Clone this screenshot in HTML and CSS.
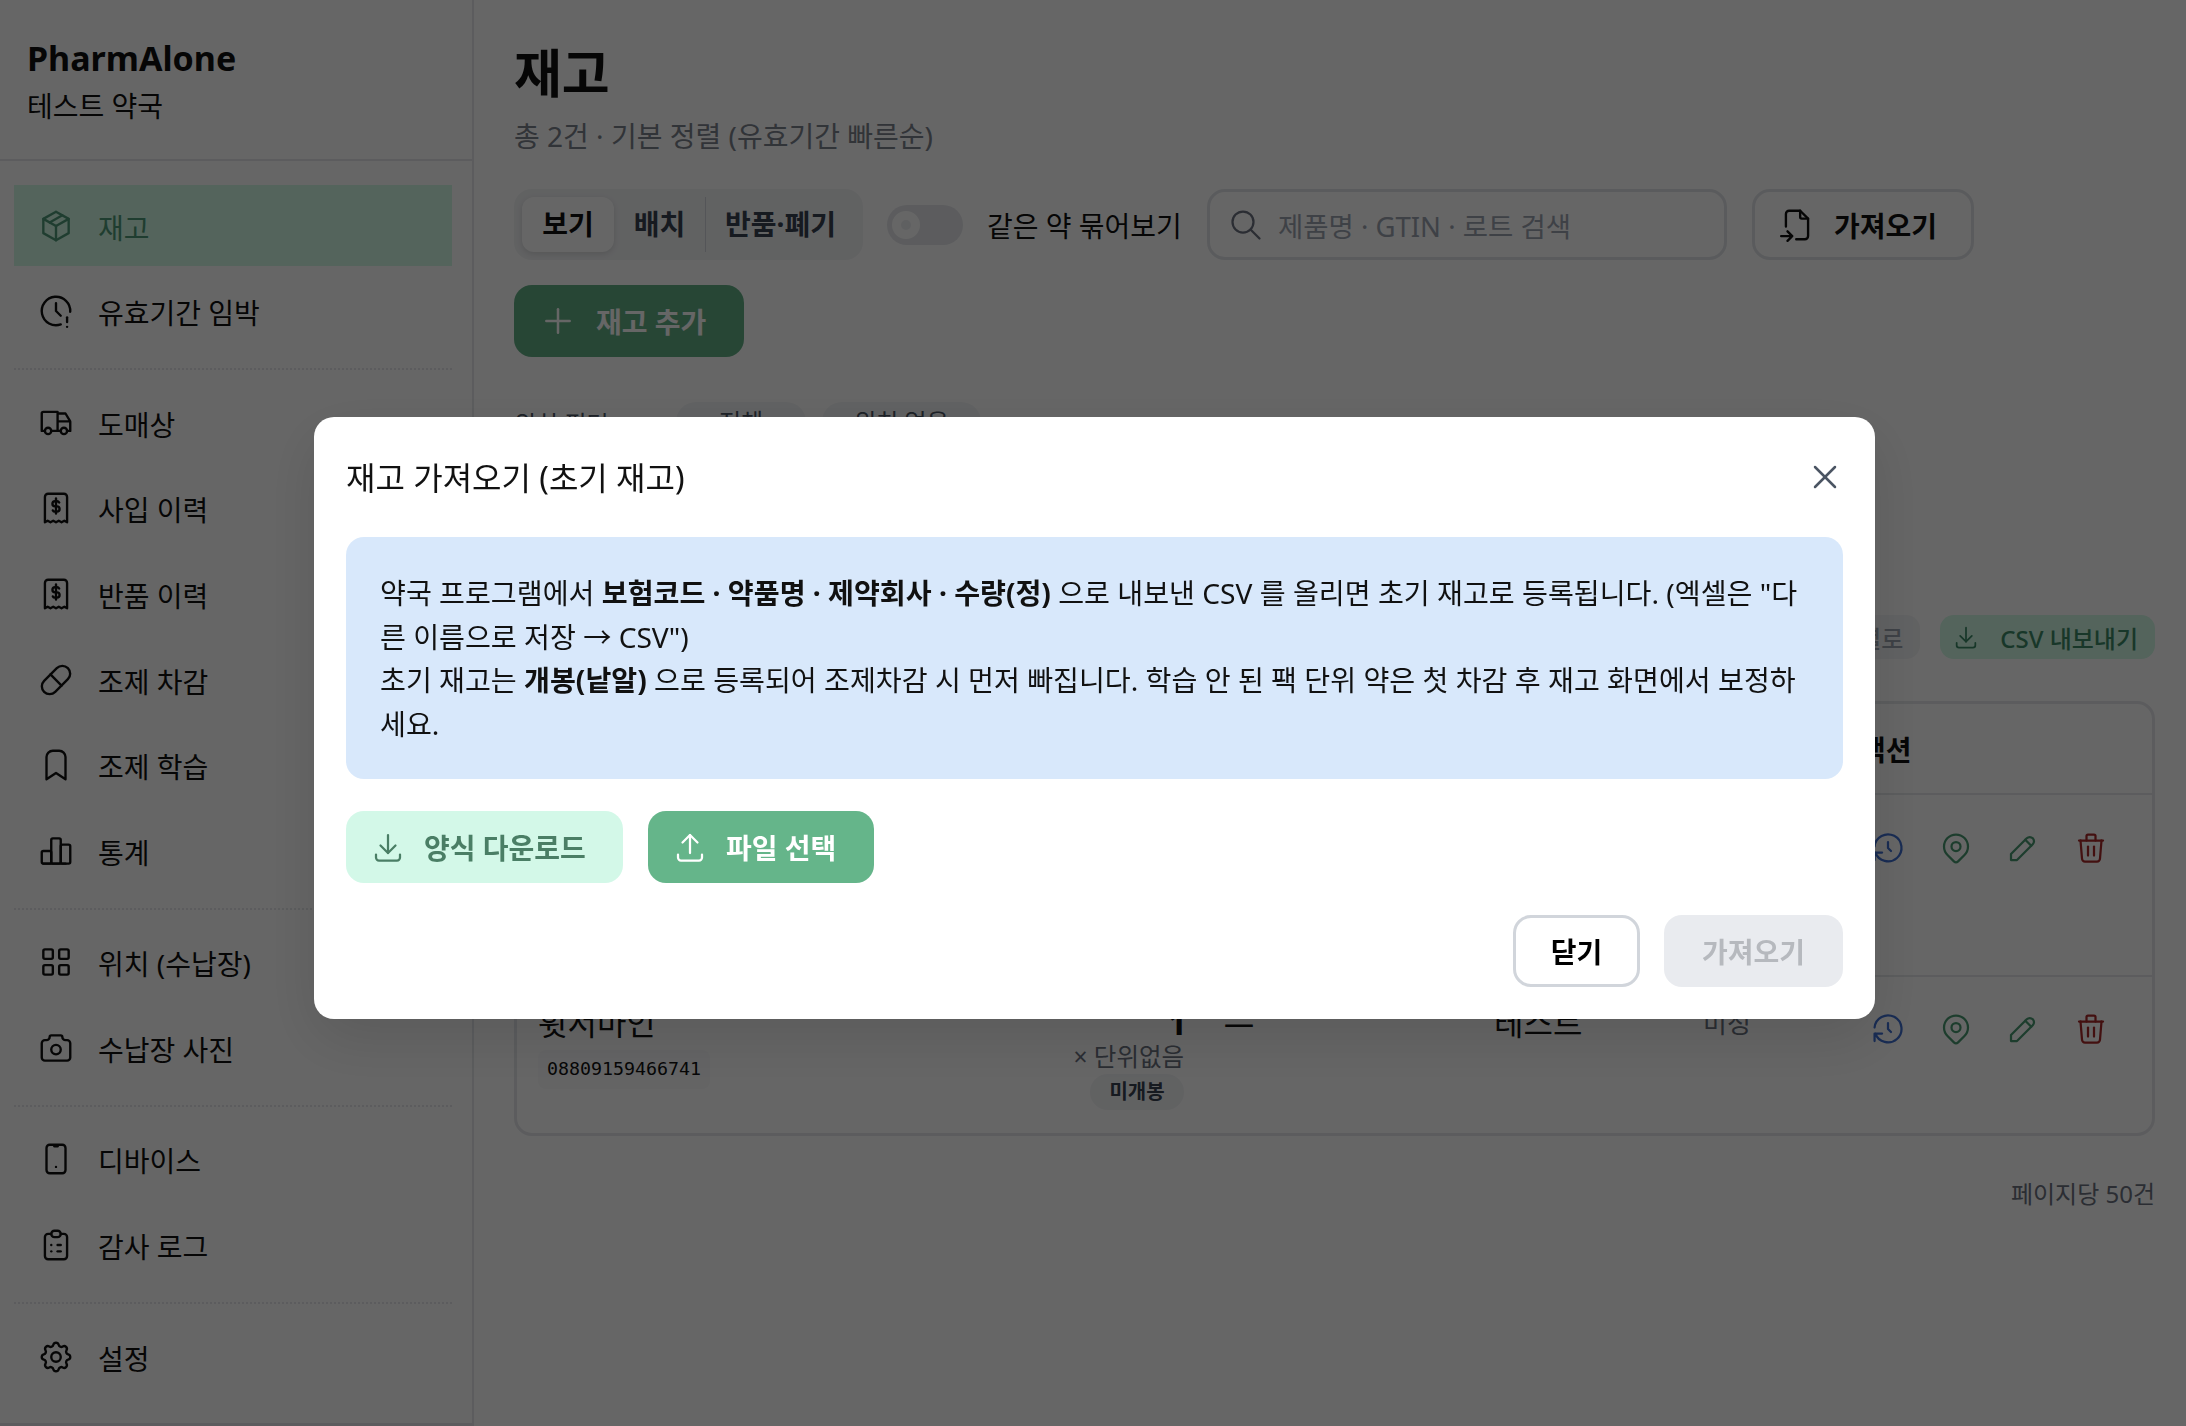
FILE: index.html
```html
<!DOCTYPE html>
<html lang="ko">
<head>
  <meta charset="UTF-8" />
  <meta name="viewport" content="width=device-width, initial-scale=1.0" />
  <title>PharmAlone - 재고</title>
  <link rel="stylesheet" href="styles.css">
</head>
<body>

  <svg class="sprite" xmlns="http://www.w3.org/2000/svg">
    <symbol id="i-package" viewBox="0 0 24 24"><path d="M12 3l8 4.5l0 9l-8 4.5l-8 -4.5l0 -9l8 -4.5"/><path d="M12 12l8 -4.5"/><path d="M12 12l0 9"/><path d="M12 12l-8 -4.5"/><path d="M16 5.25l-8 4.5"/></symbol>
    <symbol id="i-clock" viewBox="0 0 24 24"><path d="M20.986 12.502a9 9 0 1 0 -5.973 7.98"/><path d="M12 7v5l3 3"/><path d="M19 16v3"/><path d="M19 22v.01"/></symbol>
    <symbol id="i-truck" viewBox="0 0 24 24"><path d="M5 17a2 2 0 1 0 4 0a2 2 0 1 0 -4 0"/><path d="M15 17a2 2 0 1 0 4 0a2 2 0 1 0 -4 0"/><path d="M5 17h-2v-11a1 1 0 0 1 1 -1h9v12m-4 0h6m4 0h2v-6h-8m0 -5h5l3 5"/></symbol>
    <symbol id="i-receipt" viewBox="0 0 24 24"><path d="M5 21v-16a2 2 0 0 1 2 -2h10a2 2 0 0 1 2 2v16l-1.75 -1l-1.75 1l-1.75 -1l-1.75 1l-1.75 -1l-1.75 1l-1.75 -1l-1.75 1"/><path d="M14 8.5a1.5 1.5 0 0 0 -1.4 -.8h-1.2a1.6 1.6 0 1 0 0 3.3h1.2a1.6 1.6 0 1 1 0 3.3h-1.2a1.5 1.5 0 0 1 -1.4 -.8"/><path d="M12 6v9.5"/></symbol>
    <symbol id="i-pill" viewBox="0 0 24 24"><path d="M4.5 12.5l8 -8a4.94 4.94 0 0 1 7 7l-8 8a4.94 4.94 0 0 1 -7 -7"/><path d="M8.5 8.5l7 7"/></symbol>
    <symbol id="i-bookmark" viewBox="0 0 24 24"><path d="M18 7v14l-6 -4l-6 4v-14a4 4 0 0 1 4 -4h4a4 4 0 0 1 4 4z"/></symbol>
    <symbol id="i-chart" viewBox="0 0 24 24"><path d="M3 13a1 1 0 0 1 1 -1h4a1 1 0 0 1 1 1v6a1 1 0 0 1 -1 1h-4a1 1 0 0 1 -1 -1z"/><path d="M15 9a1 1 0 0 1 1 -1h4a1 1 0 0 1 1 1v10a1 1 0 0 1 -1 1h-4a1 1 0 0 1 -1 -1z"/><path d="M9 5a1 1 0 0 1 1 -1h4a1 1 0 0 1 1 1v14a1 1 0 0 1 -1 1h-4a1 1 0 0 1 -1 -1z"/><path d="M4 20h14"/></symbol>
    <symbol id="i-grid" viewBox="0 0 24 24"><rect x="4" y="4" width="6" height="6" rx="1"/><rect x="14" y="4" width="6" height="6" rx="1"/><rect x="4" y="14" width="6" height="6" rx="1"/><rect x="14" y="14" width="6" height="6" rx="1"/></symbol>
    <symbol id="i-camera" viewBox="0 0 24 24"><path d="M5 7h1a2 2 0 0 0 2 -2a1 1 0 0 1 1 -1h6a1 1 0 0 1 1 1a2 2 0 0 0 2 2h1a2 2 0 0 1 2 2v9a2 2 0 0 1 -2 2h-14a2 2 0 0 1 -2 -2v-9a2 2 0 0 1 2 -2"/><path d="M9 13a3 3 0 1 0 6 0a3 3 0 0 0 -6 0"/></symbol>
    <symbol id="i-mobile" viewBox="0 0 24 24"><path d="M6 5a2 2 0 0 1 2 -2h8a2 2 0 0 1 2 2v14a2 2 0 0 1 -2 2h-8a2 2 0 0 1 -2 -2v-14z"/><path d="M11 4h2"/><path d="M12 17v.01"/></symbol>
    <symbol id="i-clipboard" viewBox="0 0 24 24"><path d="M9 5h-2a2 2 0 0 0 -2 2v12a2 2 0 0 0 2 2h10a2 2 0 0 0 2 -2v-12a2 2 0 0 0 -2 -2h-2"/><path d="M9 5a2 2 0 0 1 2 -2h2a2 2 0 0 1 2 2a2 2 0 0 1 -2 2h-2a2 2 0 0 1 -2 -2z"/><path d="M9 12h.01"/><path d="M13 12h2"/><path d="M9 16h.01"/><path d="M13 16h2"/></symbol>
    <symbol id="i-settings" viewBox="0 0 24 24"><path d="M10.325 4.317c.426 -1.756 2.924 -1.756 3.35 0a1.724 1.724 0 0 0 2.573 1.066c1.543 -.94 3.31 .826 2.37 2.37a1.724 1.724 0 0 0 1.065 2.572c1.756 .426 1.756 2.924 0 3.35a1.724 1.724 0 0 0 -1.066 2.573c.94 1.543 -.826 3.31 -2.37 2.37a1.724 1.724 0 0 0 -2.572 1.065c-.426 1.756 -2.924 1.756 -3.35 0a1.724 1.724 0 0 0 -2.573 -1.066c-1.543 .94 -3.31 -.826 -2.37 -2.37a1.724 1.724 0 0 0 -1.065 -2.572c-1.756 -.426 -1.756 -2.924 0 -3.35a1.724 1.724 0 0 0 1.066 -2.573c-.94 -1.543 .826 -3.31 2.37 -2.37c1 .608 2.296 .07 2.572 -1.065z"/><path d="M9 12a3 3 0 1 0 6 0a3 3 0 0 0 -6 0"/></symbol>
    <symbol id="i-search" viewBox="0 0 24 24"><path d="M3 10a7 7 0 1 0 14 0a7 7 0 1 0 -14 0"/><path d="M21 21l-6 -6"/></symbol>
    <symbol id="i-import" viewBox="0 0 24 24"><path d="M14 3v4a1 1 0 0 0 1 1h4"/><path d="M5 13v-8a2 2 0 0 1 2 -2h7l5 5v11a2 2 0 0 1 -2 2h-5.5m-9.5 -2h7m-3 -3l3 3l-3 3"/></symbol>
    <symbol id="i-plus" viewBox="0 0 24 24"><path d="M12 5v14"/><path d="M5 12h14"/></symbol>
    <symbol id="i-download" viewBox="0 0 24 24"><path d="M4 17v2a2 2 0 0 0 2 2h12a2 2 0 0 0 2 -2v-2"/><path d="M7 11l5 5l5 -5"/><path d="M12 4v12"/></symbol>
    <symbol id="i-upload" viewBox="0 0 24 24"><path d="M4 17v2a2 2 0 0 0 2 2h12a2 2 0 0 0 2 -2v-2"/><path d="M7 9l5 -5l5 5"/><path d="M12 4v12"/></symbol>
    <symbol id="i-x" viewBox="0 0 24 24"><path d="M18 6l-12 12"/><path d="M6 6l12 12"/></symbol>
    <symbol id="i-history" viewBox="0 0 24 24"><path d="M12 8v4l2 2"/><path d="M3.05 11a9 9 0 1 1 .5 4m-.5 5v-5h5"/></symbol>
    <symbol id="i-pin" viewBox="0 0 24 24"><path d="M9 11a3 3 0 1 0 6 0a3 3 0 0 0 -6 0"/><path d="M17.657 16.657l-4.243 4.243a2 2 0 0 1 -2.827 0l-4.244 -4.243a8 8 0 1 1 11.314 0z"/></symbol>
    <symbol id="i-pencil" viewBox="0 0 24 24"><path d="M4 20h4l10.5 -10.5a2.828 2.828 0 1 0 -4 -4l-10.5 10.5v4"/><path d="M13.5 6.5l4 4"/></symbol>
    <symbol id="i-trash" viewBox="0 0 24 24"><path d="M4 7h16"/><path d="M10 11v6"/><path d="M14 11v6"/><path d="M5 7l1 12a2 2 0 0 0 2 2h8a2 2 0 0 0 2 -2l1 -12"/><path d="M9 7v-3a1 1 0 0 1 1 -1h4a1 1 0 0 1 1 1v3"/></symbol>
  </svg>

  <div class="app">
    <aside class="sidebar">
      <div class="brand">
        <div class="brand-name">PharmAlone</div>
        <div class="brand-store">테스트 약국</div>
      </div>
      <nav class="nav">
        <a class="nav-item active"><svg class="icon nav-icon"><use href="#i-package"/></svg>재고</a>
        <a class="nav-item"><svg class="icon nav-icon"><use href="#i-clock"/></svg>유효기간 임박</a>
        <div class="nav-divider"></div>
        <a class="nav-item"><svg class="icon nav-icon"><use href="#i-truck"/></svg>도매상</a>
        <a class="nav-item"><svg class="icon nav-icon"><use href="#i-receipt"/></svg>사입 이력</a>
        <a class="nav-item"><svg class="icon nav-icon"><use href="#i-receipt"/></svg>반품 이력</a>
        <a class="nav-item"><svg class="icon nav-icon"><use href="#i-pill"/></svg>조제 차감</a>
        <a class="nav-item"><svg class="icon nav-icon"><use href="#i-bookmark"/></svg>조제 학습</a>
        <a class="nav-item"><svg class="icon nav-icon"><use href="#i-chart"/></svg>통계</a>
        <div class="nav-divider"></div>
        <a class="nav-item"><svg class="icon nav-icon"><use href="#i-grid"/></svg>위치 (수납장)</a>
        <a class="nav-item"><svg class="icon nav-icon"><use href="#i-camera"/></svg>수납장 사진</a>
        <div class="nav-divider"></div>
        <a class="nav-item"><svg class="icon nav-icon"><use href="#i-mobile"/></svg>디바이스</a>
        <a class="nav-item"><svg class="icon nav-icon"><use href="#i-clipboard"/></svg>감사 로그</a>
        <div class="nav-divider"></div>
        <a class="nav-item"><svg class="icon nav-icon"><use href="#i-settings"/></svg>설정</a>
      </nav>
    </aside>

    <main class="main">
      <h1 class="page-title">재고</h1>
      <p class="page-sub">총 2건 · 기본 정렬 (유효기간 빠른순)</p>

      <div class="toolbar">
        <div class="segment">
          <span class="seg-tab on">보기</span>
          <span class="seg-tab split">배치</span>
          <span class="seg-tab">반품·폐기</span>
        </div>
        <div class="toggle"><span class="toggle-knob"></span></div>
        <span class="toggle-label">같은 약 묶어보기</span>
        <div class="search">
          <svg class="icon search-icon"><use href="#i-search"/></svg>
          <span class="search-hint">제품명 · GTIN · 로트 검색</span>
        </div>
        <button class="btn btn-outline btn-import"><svg class="icon btn-icon"><use href="#i-import"/></svg>가져오기</button>
      </div>

      <button class="btn btn-add"><svg class="icon btn-icon"><use href="#i-plus"/></svg>재고 추가</button>

      <div class="filter-row">
        <span class="filter-label">위치 필터</span>
        <span class="chip chip-all">전체</span>
        <span class="chip chip-none">위치 없음</span>
      </div>

      <div class="action-row">
        <span class="tool-chip">기본 정렬로</span>
        <span class="tool-chip green"><svg class="icon tool-icon"><use href="#i-download"/></svg>CSV 내보내기</span>
      </div>

      <div class="table">
        <div class="t-row t-head">
          <span></span><span></span><span></span><span></span><span></span>
          <span class="t-actions-title">액션</span>
        </div>
        <div class="t-row t-first">
          <span></span><span></span><span></span><span></span><span></span>
          <div class="t-actions">
            <svg class="icon act blue"><use href="#i-history"/></svg>
            <svg class="icon act green"><use href="#i-pin"/></svg>
            <svg class="icon act green"><use href="#i-pencil"/></svg>
            <svg class="icon act red"><use href="#i-trash"/></svg>
          </div>
        </div>
        <div class="t-row t-last">
          <div class="cell-name">
            <div class="drug-name">휫서마인</div>
            <code class="drug-code">08809159466741</code>
          </div>
          <div class="cell-qty">
            <div class="qty-num">1</div>
            <div class="qty-unit">× 단위없음</div>
            <span class="badge">미개봉</span>
          </div>
          <div class="cell-dash">—</div>
          <div class="cell-maker">테스트</div>
          <div class="cell-loc">미정</div>
          <div class="t-actions">
            <svg class="icon act blue"><use href="#i-history"/></svg>
            <svg class="icon act green"><use href="#i-pin"/></svg>
            <svg class="icon act green"><use href="#i-pencil"/></svg>
            <svg class="icon act red"><use href="#i-trash"/></svg>
          </div>
        </div>
      </div>

      <div class="per-page">페이지당 50건</div>
    </main>
  </div>

  <div class="overlay">
    <div class="modal">
      <div class="modal-head">
        <h2 class="modal-title">재고 가져오기 (초기 재고)</h2>
        <svg class="icon modal-close"><use href="#i-x"/></svg>
      </div>
      <div class="notice">
        <p>약국 프로그램에서 <b>보험코드 · 약품명 · 제약회사 · 수량(정)</b> 으로 내보낸 CSV 를 올리면 초기 재고로 등록됩니다. (엑셀은 "다른 이름으로 저장 → CSV")</p>
        <p>초기 재고는 <b>개봉(낱알)</b> 으로 등록되어 조제차감 시 먼저 빠집니다. 학습 안 된 팩 단위 약은 첫 차감 후 재고 화면에서 보정하세요.</p>
      </div>
      <div class="modal-tools">
        <button class="btn btn-template"><svg class="icon btn-icon"><use href="#i-download"/></svg>양식 다운로드</button>
        <button class="btn btn-file"><svg class="icon btn-icon"><use href="#i-upload"/></svg>파일 선택</button>
      </div>
      <div class="modal-foot">
        <button class="btn btn-close">닫기</button>
        <button class="btn btn-disabled">가져오기</button>
      </div>
    </div>
  </div>

</body>
</html>
```

FILE: styles.css
```css
* {
  box-sizing: border-box;
}
html, body {
  height: 100%;
}
body {
  margin: 0;
  background: #fff;
  color: #111;
  font-family: "Noto Sans", "Noto Sans CJK KR", sans-serif;
  font-size: 28px;
  overflow: hidden;
}
.sprite {
  display: none;
}
.icon {
  fill: none;
  stroke: currentColor;
  stroke-width: 1.5;
  stroke-linecap: round;
  stroke-linejoin: round;
  flex: none;
}

.app {
  display: flex;
  height: 100vh;
}

/* sidebar */
.sidebar {
  width: 474px;
  flex: none;
  border-right: 2px solid #e5e7eb;
  border-bottom: 3px solid #e5e7eb;
}
.brand {
  height: 161px;
  padding: 36px 27px 0;
  border-bottom: 2px solid #e5e7eb;
}
.brand-name {
  font-size: 34px;
  line-height: 44px;
  font-weight: 700;
}
.brand-store {
  margin-top: 6px;
  line-height: 40px;
}
.nav {
  display: flex;
  flex-direction: column;
  gap: 4.7px;
  padding: 24px 20px 0 14px;
}
.nav-item {
  display: flex;
  align-items: center;
  gap: 23px;
  height: 81px;
  padding: 2px 0 0 23px;
}
.nav-item.active {
  background: #d1fae5;
  color: #4f9a78;
}
.nav-icon {
  width: 38px;
  height: 38px;
  margin-top: -2px;
}
.nav-divider {
  border-top: 2px dotted #e5e7eb;
  margin: 12px 0 7px;
}

/* main */
.main {
  flex: 1;
  min-width: 0;
  padding: 43px 31px 0 40px;
}
.page-title {
  margin: 0;
  font-size: 52px;
  line-height: 60px;
  font-weight: 700;
}
.page-sub {
  margin: 13px 0 0;
  line-height: 40px;
  color: #7c828c;
}
.toolbar {
  display: flex;
  align-items: center;
  height: 71px;
  margin-top: 33px;
}
.segment {
  display: flex;
  align-items: center;
  width: 349px;
  height: 71px;
  padding: 0 8px;
  background: #f3f4f6;
  border-radius: 18px;
}
.seg-tab {
  height: 55px;
  line-height: 55px;
  text-align: center;
  font-weight: 700;
  width: 92px;
  color: #374151;
}
.seg-tab:last-child {
  width: 149px;
}
.seg-tab.on {
  background: #fff;
  border-radius: 12px;
  color: #111;
  box-shadow: 0 2px 6px rgba(0,0,0,0.12);
}
.seg-tab.split {
  border-right: 1px solid #d1d5db;
}
.toggle {
  width: 76px;
  height: 40px;
  margin-left: 24px;
  padding: 6px 5px;
  background: #e5e7eb;
  border-radius: 20px;
}
.toggle-knob {
  display: block;
  width: 28px;
  height: 28px;
  border-radius: 50%;
  background: #eef0f3;
  border: 9px solid #fff;
}
.toggle-label {
  margin-left: 24px;
  white-space: nowrap;
}
.search {
  display: flex;
  align-items: center;
  gap: 14px;
  width: 520px;
  height: 71px;
  margin-left: 25px;
  padding-left: 18px;
  border: 3px solid #e2e4e8;
  border-radius: 18px;
  color: #9ca3af;
  font-size: 27.5px;
}
.search-icon {
  width: 36px;
  height: 36px;
  color: #6b7280;
}
.btn {
  display: inline-flex;
  align-items: center;
  gap: 18px;
  height: 72px;
  padding: 0 0 0 24px;
  border: 0;
  border-radius: 18px;
  font: inherit;
  font-weight: 700;
}
.btn-icon {
  width: 36px;
  height: 36px;
}
.btn-outline {
  background: #fff;
  color: #111;
  border: 3px solid #e2e4e8;
}
.btn-import {
  width: 222px;
  height: 71px;
  margin-left: 25px;
  padding-left: 23px;
}
.btn-import .btn-icon {
  width: 38px;
  height: 38px;
}
.btn-add {
  display: flex;
  width: 230px;
  margin-top: 25px;
  background: #62ae86;
  color: #fff;
}
.btn-add .btn-icon {
  width: 40px;
  height: 40px;
}
.filter-row {
  display: flex;
  align-items: center;
  height: 40px;
  margin-top: 45px;
  color: #4b5563;
  font-size: 24px;
}
.filter-label {
  width: 162px;
}
.chip {
  height: 40px;
  line-height: 40px;
  text-align: center;
  background: #f3f4f6;
  border-radius: 20px;
}
.chip-all {
  width: 130px;
}
.chip-none {
  width: 159px;
  margin-left: 16px;
}
.action-row {
  display: flex;
  justify-content: flex-end;
  align-items: center;
  gap: 20px;
  margin-top: 173px;
  font-size: 24px;
}
.tool-chip {
  display: flex;
  align-items: center;
  height: 44px;
  padding: 0 17px;
  gap: 20px;
  background: #f3f4f6;
  color: #9ca3af;
  border-radius: 14px;
  font-weight: 500;
}
.tool-chip.green {
  padding-left: 12px;
  background: #d1fae5;
  color: #3d8a68;
}
.tool-icon {
  width: 28px;
  height: 28px;
}

/* table */
.table {
  margin-top: 42px;
  height: 435px;
  border: 3px solid #e5e7eb;
  border-radius: 18px;
}
.t-row {
  display: grid;
  grid-template-columns: 483px 204px 270px 209px 177px 1fr;
  border-bottom: 2px solid #e5e7eb;
}
.t-head {
  height: 91px;
  align-items: center;
}
.t-actions-title {
  font-weight: 700;
}
.t-first {
  height: 182px;
  padding-top: 35px;
}
.t-last {
  border-bottom: 0;
  padding-top: 24px;
}
.t-actions {
  display: flex;
  gap: 31.6px;
  padding-left: 10px;
  padding-top: 10px;
}
.t-first .t-actions {
  padding-top: 0;
}
.act {
  width: 36px;
  height: 36px;
}
.act.blue { color: #3f6fd0; }
.act.green { color: #4a9a72; }
.act.red { color: #a82a2a; }
.cell-name {
  padding-left: 21px;
}
.drug-name {
  font-size: 32px;
  line-height: 44px;
}
.drug-code {
  display: inline-block;
  margin-top: 2px;
  padding: 0 9px;
  height: 39px;
  line-height: 37px;
  background: #f9fafb;
  border-radius: 8px;
  font-family: "DejaVu Sans Mono", monospace;
  font-size: 18.3px;
}
.cell-qty {
  padding-right: 20px;
  text-align: right;
}
.qty-num {
  margin-right: -3px;
  font-size: 33px;
  line-height: 44px;
  font-weight: 700;
}
.qty-unit {
  font-size: 24.5px;
  line-height: 24px;
  color: #6b7280;
}
.badge {
  display: inline-block;
  margin-top: 4px;
  width: 94px;
  height: 36px;
  line-height: 36px;
  text-align: center;
  background: #f3f4f6;
  border-radius: 18px;
  font-size: 20px;
  font-weight: 700;
  color: #374151;
}
.cell-dash {
  padding-left: 20px;
  font-size: 30px;
  line-height: 44px;
}
.cell-maker {
  padding-left: 20px;
  font-size: 32px;
  line-height: 44px;
}
.cell-loc {
  padding-left: 20px;
  font-size: 26px;
  line-height: 44px;
  color: #6b7280;
}
.per-page {
  margin-top: 40px;
  text-align: right;
  font-size: 24px;
  line-height: 36px;
  color: #6b7280;
}

/* import dialog */
.overlay {
  position: fixed;
  inset: 0;
  display: flex;
  justify-content: center;
  align-items: flex-start;
  padding: 417px 311px 0 314px;
  background: rgba(0,0,0,0.6);
}
.modal {
  width: 1561px;
  height: 602px;
  padding: 0 32px;
  background: #fff;
  border-radius: 20px;
  box-shadow: 0 20px 60px rgba(0,0,0,0.12);
}
.modal-head {
  display: flex;
  justify-content: space-between;
  align-items: center;
  height: 120px;
}
.modal-title {
  margin: -2px 0 0;
  font-size: 32px;
  font-weight: 400;
}
.modal-close {
  width: 40px;
  height: 40px;
  margin-right: -1.5px;
  color: #4b5563;
}
.notice {
  height: 242px;
  padding: 35px 34px 0;
  background: #d8e8fb;
  border-radius: 18px;
  font-size: 28.15px;
  line-height: 43.5px;
}
.notice p {
  margin: 0;
}
.modal-tools {
  display: flex;
  gap: 25px;
  margin-top: 32px;
}
.btn-template {
  width: 277px;
  background: #d3f8e8;
  color: #4a7e65;
}
.btn-file {
  width: 226px;
  background: #65b58a;
  color: #fff;
}
.modal-foot {
  display: flex;
  justify-content: flex-end;
  gap: 24px;
  margin-top: 32px;
}
.btn-close,
.btn-disabled {
  justify-content: center;
  padding: 0;
}
.btn-close {
  width: 127px;
  background: #fff;
  border: 3px solid #d1d5db;
  color: #000;
}
.btn-disabled {
  width: 179px;
  background: #e9ebef;
  color: #b6b9be;
}
```
